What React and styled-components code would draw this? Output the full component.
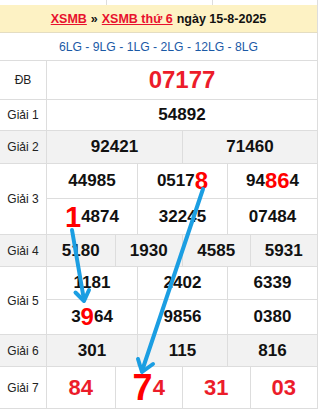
import React from 'react';
import styled, { createGlobalStyle } from 'styled-components';

const Global = createGlobalStyle`
  html, body { margin: 0; padding: 0; background: #fff; }
  body { font-family: "Liberation Sans", Arial, sans-serif; }
`;

const Page = styled.div`
  position: relative;
  width: 318px;
  height: 410px;
  overflow: hidden;
`;

const TopStrip = styled.div`
  display: grid;
  grid-template-columns: 107px 106px 1fr;
  height: 5px;
  border-right: 1px solid #ddd;
`;

const StripCell = styled.div`
  border-right: 1px solid #ddd;
  &:last-child { border-right: none; }
`;

const Header = styled.div`
  height: 27px;
  background: #fdf2c4;
  border-bottom: 1px solid #e4ddc2;
  border-right: 1px solid #ddd;
  display: flex;
  align-items: center;
  justify-content: center;
  gap: 4px;
  font-weight: bold;
  font-size: 12.5px;
  color: #111;
`;

const RedLink = styled.a`
  color: #e8112d;
  text-decoration: underline;
`;

const Codes = styled.div`
  height: 27px;
  border-bottom: 1px solid #ddd;
  border-right: 1px solid #ddd;
  display: flex;
  align-items: center;
  justify-content: center;
  font-size: 12.2px;
  color: #1b5aa6;
`;

const Row = styled.div`
  display: flex;
  border-bottom: 1px solid #ddd;
  border-right: 1px solid #ddd;
  background: ${p => (p.$gray ? '#f2f2f2' : '#fff')};
`;

const Label = styled.div`
  width: 46px;
  flex: none;
  border-right: 1px solid #ddd;
  display: flex;
  align-items: center;
  justify-content: center;
  font-size: 12px;
  color: #222;
`;

const Body = styled.div`
  flex: 1;
  display: flex;
  flex-direction: column;
`;

const SubRow = styled.div`
  display: grid;
  grid-template-columns: repeat(${p => p.$cols}, 1fr);
  height: ${p => p.$h}px;
  & + & { border-top: 1px solid #ddd; }
`;

const Cell = styled.div`
  display: flex;
  align-items: center;
  justify-content: center;
  font-weight: bold;
  font-size: ${p => p.$size || 17}px;
  line-height: 20px;
  color: ${p => (p.$red ? '#ec1c2a' : '#111')};
  & + & { border-left: 1px solid #ddd; }
`;

const Hi = styled.span`
  color: #ff0000;
  font-size: ${p => p.$size}px;
  line-height: 0;
`;

const Arrows = styled.svg`
  position: absolute;
  left: 0;
  top: 0;
  pointer-events: none;
`;

const renderNum = (v) => {
  if (typeof v === 'string') return v;
  return v.map((part, i) =>
    typeof part === 'string' ? <span key={i}>{part}</span> : <Hi key={i} $size={part.s}>{part.t}</Hi>
  );
};

const rows = [
  { label: 'ĐB', subs: [{ h: 38, cells: ['07177'] }], red: true, size: 24 },
  { label: 'Giải 1', subs: [{ h: 30, cells: ['54892'] }] },
  { label: 'Giải 2', gray: true, subs: [{ h: 32, cells: ['92421', '71460'] }] },
  {
    label: 'Giải 3',
    subs: [
      { h: 34, cells: ['44985', ['0517', { t: '8', s: 24 }], ['94', { t: '86', s: 22 }, '4']] },
      { h: 35, cells: [[{ t: '1', s: 29 }, '4874'], '32245', '07484'] },
    ],
  },
  { label: 'Giải 4', gray: true, subs: [{ h: 31, cells: ['5180', '1930', '4585', '5931'] }] },
  {
    label: 'Giải 5',
    subs: [
      { h: 32, cells: ['1181', '2402', '6339'] },
      { h: 34, cells: [['3', { t: '9', s: 24 }, '64'], '9856', '0380'] },
    ],
  },
  { label: 'Giải 6', gray: true, subs: [{ h: 31, cells: ['301', '115', '816'] }] },
  {
    label: 'Giải 7',
    red: true,
    size: 22,
    subs: [{ h: 41, cells: ['84', [{ t: '7', s: 36 }, '4'], '31', '03'] }],
  },
];

export default function App() {
  return (
    <>
      <Global />
      <Page>
        <TopStrip>
          <StripCell />
          <StripCell />
          <StripCell />
        </TopStrip>
        <Header>
          <RedLink>XSMB</RedLink>
          <span>»</span>
          <RedLink>XSMB thứ 6</RedLink>
          <span>ngày 15-8-2025</span>
        </Header>
        <Codes>6LG - 9LG - 1LG - 2LG - 12LG - 8LG</Codes>
        {rows.map((r) => (
          <Row key={r.label} $gray={r.gray}>
            <Label>{r.label}</Label>
            <Body>
              {r.subs.map((s, i) => (
                <SubRow key={i} $cols={s.cells.length} $h={s.h}>
                  {s.cells.map((c, j) => (
                    <Cell key={j} $red={r.red} $size={r.size}>
                      {renderNum(c)}
                    </Cell>
                  ))}
                </SubRow>
              ))}
            </Body>
          </Row>
        ))}
        <Arrows width="319" height="410" viewBox="0 0 319 410">
          <g stroke="#1b9ee2" strokeWidth="4" strokeLinecap="round" strokeLinejoin="round" fill="none">
            <line x1="72" y1="230" x2="84" y2="300" />
            <polyline points="75.5,292.5 84,301 89,290" />
            <line x1="203" y1="189" x2="142" y2="371" />
            <polyline points="138,359 142,372 153,364" />
          </g>
        </Arrows>
      </Page>
    </>
  );
}
